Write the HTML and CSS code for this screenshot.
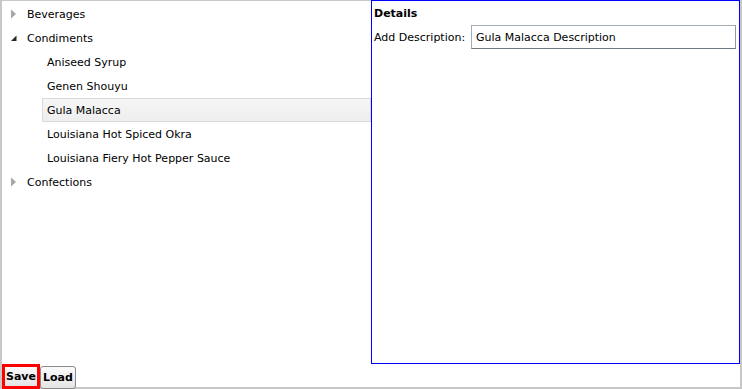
FILE: index.html
```html
<!DOCTYPE html>
<html>
<head>
<meta charset="utf-8">
<link rel="stylesheet" href="styles.css">
</head>
<body>
<div class="frame">
  <div class="main">
    <div class="tree">
      <div class="row top">
        <span class="exp"><svg width="7" height="10" viewBox="0 0 7 10"><path d="M1 0.5 L6 5 L1 9.5 Z" fill="#a6a6a6"/></svg></span>
        <span class="label">Beverages</span>
      </div>
      <div class="row top">
        <span class="exp"><svg width="7" height="10" viewBox="0 0 7 10"><path d="M6.5 2.5 L6.5 8 L1 8 Z" fill="#262626"/></svg></span>
        <span class="label">Condiments</span>
      </div>
      <div class="children">
        <div class="row child"><span class="item">Aniseed Syrup</span></div>
        <div class="row child"><span class="item">Genen Shouyu</span></div>
        <div class="row child"><span class="item selected">Gula Malacca</span></div>
        <div class="row child"><span class="item">Louisiana Hot Spiced Okra</span></div>
        <div class="row child"><span class="item">Louisiana Fiery Hot Pepper Sauce</span></div>
      </div>
      <div class="row top">
        <span class="exp"><svg width="7" height="10" viewBox="0 0 7 10"><path d="M1 0.5 L6 5 L1 9.5 Z" fill="#a6a6a6"/></svg></span>
        <span class="label">Confections</span>
      </div>
    </div>
    <div class="details">
      <div class="title">Details</div>
      <div class="field">
        <span class="flabel">Add Description:</span>
        <div class="input">Gula Malacca Description</div>
      </div>
    </div>
  </div>
  <div class="buttons">
    <button class="btn save">Save</button>
    <button class="btn">Load</button>
  </div>
</div>
</body>
</html>
```
FILE: styles.css
```css
html, body {
  margin: 0;
  padding: 0;
  background: #ffffff;
}
body {
  font-family: "DejaVu Sans", Verdana, sans-serif;
  font-size: 11px;
  color: #000;
}
.frame {
  width: 742px;
  height: 389px;
  box-sizing: border-box;
  border-top: 1px solid #c8c8c8;
  border-left: 2px solid #c8c8c8;
  border-right: 2px solid #c8c8c8;
  border-bottom: 2px solid #c8c8c8;
  display: flex;
  flex-direction: column;
}
.main {
  display: flex;
  height: 363px;
}
.tree {
  width: 369px;
  padding-top: 1px;
}
.row {
  height: 24px;
  display: flex;
  align-items: center;
}
.top .exp {
  width: 25px;
  padding-left: 8px;
  box-sizing: border-box;
  display: flex;
  align-items: center;
}
.child {
  padding-left: 40px;
}
.item {
  display: flex;
  align-items: center;
  height: 24px;
  box-sizing: border-box;
  padding-left: 4px;
  border: 1px solid transparent;
  flex: 1;
}
.item.selected {
  border-color: #dadada;
  background: linear-gradient(#f6f6f6, #eeeeee);
}
.details {
  width: 369px;
  height: 364px;
  margin-top: -1px;
  box-sizing: border-box;
  border: 1px solid #0000ff;
  padding: 6px 2px 0 2px;
}
.title {
  font-weight: bold;
  height: 16px;
}
.field {
  display: flex;
  align-items: center;
  margin-top: 2px;
}
.flabel {
  width: 97px;
  flex: none;
  white-space: nowrap;
}
.input {
  width: 265px;
  height: 24px;
  box-sizing: border-box;
  border: 1px solid #a4acb4;
  border-bottom-color: #707880;
  border-right-color: #909aa4;
  padding-left: 4px;
  display: flex;
  align-items: center;
}
.buttons {
  display: flex;
  align-items: flex-end;
  flex: 1;
}
.btn {
  font-family: "DejaVu Sans", Verdana, sans-serif;
  font-weight: bold;
  font-size: 11px;
  height: 23px;
  padding: 0 2px;
  margin: 0;
  background: linear-gradient(#fbfbfb, #e4e4e4);
  border: 1px solid #8a8a8a;
  border-radius: 3px;
  color: #000;
}
.btn.save {
  border: 3px solid #ff0000;
  border-radius: 0;
  height: 25px;
  padding: 0 1px;
}
```
